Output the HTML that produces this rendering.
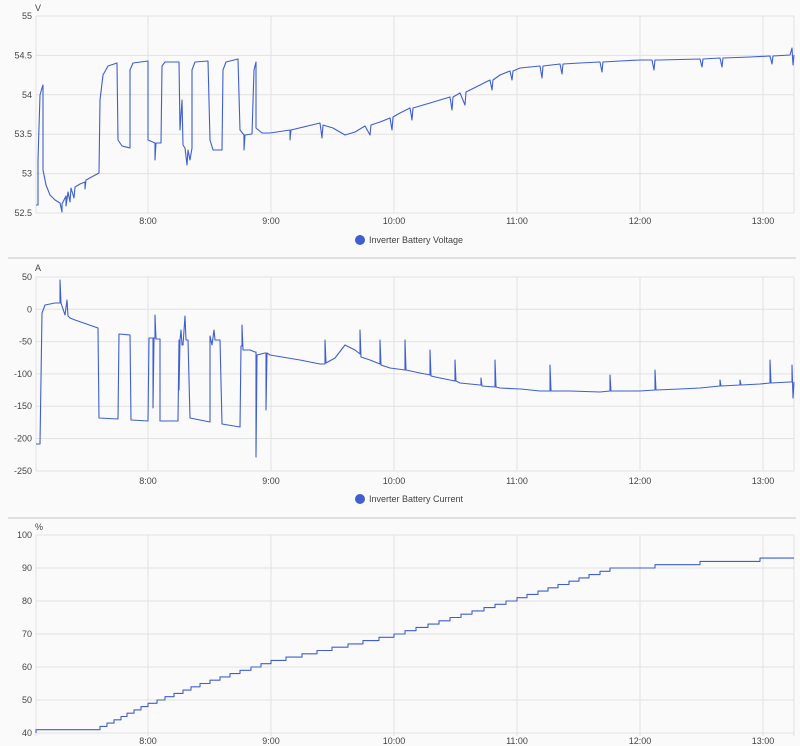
<!DOCTYPE html>
<html><head><meta charset="utf-8"><style>
html,body{margin:0;padding:0;background:#fafafa;}
svg{display:block;font-family:"Liberation Sans",sans-serif;}
.g{stroke:#e2e2e2;stroke-width:1;fill:none}
.t{font-size:9px;fill:#444}
.l{fill:none;stroke:#3f5fd0;stroke-width:1.1;stroke-linejoin:round}
</style></head><body>
<svg width="800" height="746" viewBox="0 0 800 746">
<rect x="8" y="257" width="788" height="2" fill="#e0e0e0"/>
<rect x="8" y="517" width="788" height="2" fill="#e0e0e0"/>

<!-- Chart 1 -->
<g class="g">
<path d="M36 16H794M36 55.4H794M36 94.8H794M36 134.2H794M36 173.6H794M36 213H794"/>
<path d="M36 16V213M148 16V213M271 16V213M394 16V213M517 16V213M640 16V213M763 16V213M794 16V213"/>
</g>
<g class="t" text-anchor="end">
<text x="32" y="19">55</text><text x="32" y="58.4">54.5</text><text x="32" y="97.8">54</text><text x="32" y="137.2">53.5</text><text x="32" y="176.6">53</text><text x="32" y="216">52.5</text>
</g>
<text class="t" x="35" y="11">V</text>
<g class="t" text-anchor="middle">
<text x="148" y="224">8:00</text><text x="271" y="224">9:00</text><text x="394" y="224">10:00</text><text x="517" y="224">11:00</text><text x="640" y="224">12:00</text><text x="763" y="224">13:00</text>
</g>
<circle cx="360" cy="240" r="5" fill="#3f5fd0"/>
<text class="t" x="369" y="243">Inverter Battery Voltage</text>
<path class="l" d="M36 205H38V160L40 95L42 88L43 85L43 170L46 185L50 195L55 200L60 203L62 212L62 204L66 196L66 206L68 192L70 202L71 188L74 198L75 187L80 184L85 182L85 189L86 180L99 173L100 100L103 75L108 66L117 63L118 140L122 146L130 148L130 70L133 63L148 61L148 140L155 143L155 160L156 143L161 143L162 66L165 62L179 62L180 130L182 100L183 145L185 148L187 165L188 150L190 160L192 148L192 70L195 62L208 61L210 140L213 150L222 150L223 70L226 62L238 59L240 130L244 135L244 150L245 135L252 134L254 70L256 62L256 128L262 133L270 133L290 130L290 140L291 130L320 123L322 138L323 125L333 128L345 135L355 132L365 126L370 135L371 125L380 122L390 118L392 130L393 117L400 113L410 108L412 120L413 108L430 103L450 97L452 110L453 97L460 93L465 105L466 92L480 85L490 80L492 90L493 80L500 75L510 71L512 80L513 71L520 68L540 66L542 78L543 66L560 64L562 74L563 64L580 63L600 62L602 72L603 62L620 61L640 60L652 60L654 70L655 60L660 60L700 59L702 67L703 59L720 58L722 67L723 58L750 57L770 56L772 64L773 56L790 55L792 48L793 65L794 55"/>

<!-- Chart 2 -->
<g class="g">
<path d="M36 277H794M36 309.3H794M36 341.6H794M36 373.9H794M36 406.2H794M36 438.5H794M36 471H794"/>
<path d="M36 277V471M148 277V471M271 277V471M394 277V471M517 277V471M640 277V471M763 277V471M794 277V471"/>
</g>
<g class="t" text-anchor="end">
<text x="32" y="280">50</text><text x="32" y="312.3">0</text><text x="32" y="344.6">-50</text><text x="32" y="376.9">-100</text><text x="32" y="409.2">-150</text><text x="32" y="441.5">-200</text><text x="32" y="474">-250</text>
</g>
<text class="t" x="35" y="271">A</text>
<g class="t" text-anchor="middle">
<text x="148" y="484">8:00</text><text x="271" y="484">9:00</text><text x="394" y="484">10:00</text><text x="517" y="484">11:00</text><text x="640" y="484">12:00</text><text x="763" y="484">13:00</text>
</g>
<circle cx="360" cy="499" r="5" fill="#3f5fd0"/>
<text class="t" x="369" y="502">Inverter Battery Current</text>
<path class="l" d="M36 444H40L42 313L45 305L55 303L60 303L60 280L61 303L65 315L67 300L68 316L70 318L75 320L98 328L99 418L118 419L119 334L130 335L131 420L148 421L149 338L153 338L153 408L154 338L155 338L155 315L156 339L160 339L160 421L178 421L179 340L179 390L180 340L181 330L182 345L183 345L185 316L186 340L188 340L190 418L210 422L210 336L212 345L214 330L215 340L220 340L222 424L240 427L241 346L242 346L242 325L243 350L250 350L255 352L256 352L256 457L257 355L265 353L266 353L266 410L267 353L270 355L300 360L320 364L325 364L325 340L326 363L335 358L345 345L355 350L360 354L360 330L361 357L370 360L380 364L380 340L381 365L390 368L405 370L405 340L406 370L420 373L430 375L430 350L431 376L440 378L455 381L455 360L456 381L460 383L480 385L481 385L481 378L482 386L495 387L495 360L496 387L500 388L520 389L521 389L540 391L550 391L550 365L551 391L570 391L600 392L610 391L610 375L611 391L640 391L655 390L655 370L656 390L680 389L700 388L720 386L720 380L721 386L740 385L740 380L741 385L760 384L770 383L770 360L771 383L790 382L792 382L792 365L793 398L794 382"/>

<!-- Chart 3 -->
<g class="g">
<path d="M36 535H794M36 568H794M36 601H794M36 634H794M36 667H794M36 700H794M36 733H794"/>
<path d="M36 535V736M148 535V736M271 535V736M394 535V736M517 535V736M640 535V736M763 535V736M794 535V736"/>
</g>
<g class="t" text-anchor="end">
<text x="32" y="538">100</text><text x="32" y="571">90</text><text x="32" y="604">80</text><text x="32" y="637">70</text><text x="32" y="670">60</text><text x="32" y="703">50</text><text x="32" y="736">40</text>
</g>
<text class="t" x="35" y="530">%</text>
<g class="t" text-anchor="middle">
<text x="148" y="744">8:00</text><text x="271" y="744">9:00</text><text x="394" y="744">10:00</text><text x="517" y="744">11:00</text><text x="640" y="744">12:00</text><text x="763" y="744">13:00</text>
</g>
<path class="l" d="M36 733V729.7H100V726.4H107V723.1H114V719.8H121V716.5H127V713.2H134V709.9H141V706.6H148V703.3H157V700H165V696.7H174V693.4H183V690.1H191V686.8H200V683.5H210V680.2H220V676.9H230V673.6H240V670.3H251V667H261V663.7H271V660.4H286V657.1H302V653.8H317V650.5H332V647.2H348V643.9H363V640.6H379V637.3H394V634H405V630.7H416V627.4H428V624.1H439V620.8H450V617.5H461V614.2H472V610.9H484V607.6H495V604.3H506V601H517V597.7H527V594.4H538V591.1H548V587.8H558V584.5H569V581.2H579V577.9H589V574.6H600V571.3H610V568H655V564.7H700V561.4H760V558.1H794"/>
</svg>
</body></html>
